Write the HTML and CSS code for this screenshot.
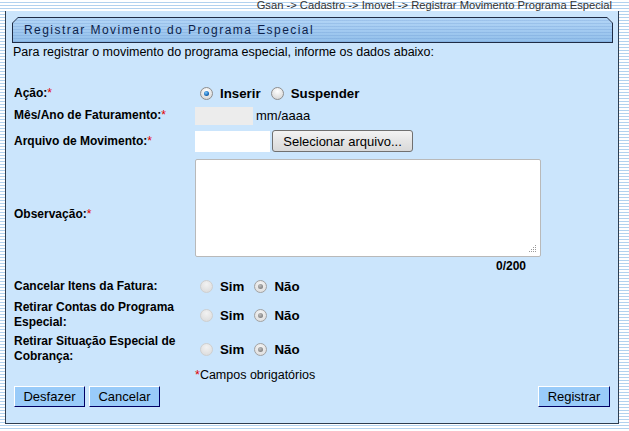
FILE: index.html
```html
<!DOCTYPE html>
<html lang="pt-BR">
<head>
<meta charset="utf-8">
<title>Registrar Movimento do Programa Especial</title>
<link rel="stylesheet" href="styles.css">
</head>
<body>
<div class="crumb">Gsan -&gt; Cadastro -&gt; Imovel -&gt; Registrar Movimento Programa Especial</div>
<div class="panel">
  <div class="tab"><div class="tab-in"><span class="tab-title">Registrar Movimento do Programa Especial</span></div></div>
  <p class="intro">Para registrar o movimento do programa especial, informe os dados abaixo:</p>
  <div class="form">
    <div class="row r-acao">
      <div class="lbl">Ação:<em>*</em></div>
      <div class="fld">
        <span class="rb on"></span><span class="opt">Inserir</span>
        <span class="rb"></span><span class="opt">Suspender</span>
      </div>
    </div>
    <div class="row r-mes">
      <div class="lbl">Mês/Ano de Faturamento:<em>*</em></div>
      <div class="fld"><input class="in-mes" type="text"><span class="hint">mm/aaaa</span></div>
    </div>
    <div class="row r-arq">
      <div class="lbl">Arquivo de Movimento:<em>*</em></div>
      <div class="fld"><input class="in-arq" type="text"><button class="file-btn" type="button">Selecionar arquivo...</button></div>
    </div>
    <div class="row r-obs">
      <div class="lbl">Observação:<em>*</em></div>
      <div class="fld col">
        <div class="ta-wrap">
          <textarea class="ta"></textarea>
          <svg class="grip" width="8" height="8" viewBox="0 0 8 8"><g fill="#9a9a9a"><rect x="6" y="0" width="1" height="1"/><rect x="4" y="2" width="1" height="1"/><rect x="6" y="2" width="1" height="1"/><rect x="2" y="4" width="1" height="1"/><rect x="4" y="4" width="1" height="1"/><rect x="6" y="4" width="1" height="1"/><rect x="0" y="6" width="1" height="1"/><rect x="2" y="6" width="1" height="1"/><rect x="4" y="6" width="1" height="1"/><rect x="6" y="6" width="1" height="1"/></g></svg>
        </div>
        <div class="counter">0/200</div>
      </div>
    </div>
    <div class="row r-canc">
      <div class="lbl">Cancelar Itens da Fatura:</div>
      <div class="fld"><span class="rb dis"></span><span class="opt">Sim</span><span class="rb dis on"></span><span class="opt">Não</span></div>
    </div>
    <div class="row r-contas">
      <div class="lbl">Retirar Contas do Programa Especial:</div>
      <div class="fld"><span class="rb dis"></span><span class="opt">Sim</span><span class="rb dis on"></span><span class="opt">Não</span></div>
    </div>
    <div class="row r-sit">
      <div class="lbl">Retirar Situação Especial de Cobrança:</div>
      <div class="fld"><span class="rb dis"></span><span class="opt">Sim</span><span class="rb dis on"></span><span class="opt">Não</span></div>
    </div>
    <div class="row r-req">
      <div class="lbl"></div>
      <div class="fld req"><em>*</em>Campos obrigatórios</div>
    </div>
  </div>
  <div class="actions">
    <div class="left">
      <button class="btn w71" type="button">Desfazer</button>
      <button class="btn w71" type="button">Cancelar</button>
    </div>
    <button class="btn w72" type="button">Registrar</button>
  </div>
</div>
</body>
</html>
```
FILE: styles.css
```css
html, body {
  margin: 0;
  padding: 0;
}
body {
  width: 629px;
  height: 431px;
  overflow: hidden;
  font-family: "Liberation Sans", Arial, sans-serif;
  color: #000;
  background: repeating-linear-gradient(to bottom, #ffffff 0 2px, #b2d2ef 2px 3px);
}
.crumb {
  height: 11px;
  font-size: 11.2px;
  line-height: 11px;
  text-align: right;
  padding-right: 17px;
  color: #333;
  white-space: nowrap;
}
.panel {
  margin-left: 5px;
  width: 612px;
  height: 412px;
  border: 1px solid #2e3d4f;
  border-top: 0;
  background: #cbe5fc;
  display: flex;
  flex-direction: column;
}
.tab {
  margin: 6px 0 0 6px;
  width: 601px;
  height: 26px;
  background: #1f2c45;
  clip-path: polygon(6px 0, calc(100% - 6px) 0, 100% 6px, 100% 100%, 0 100%, 0 6px);
  display: flex;
}
.tab-in {
  flex: 1;
  margin: 1px;
  clip-path: polygon(5px 0, calc(100% - 5px) 0, 100% 5px, 100% 100%, 0 100%, 0 5px);
  background:
    repeating-linear-gradient(to bottom, rgba(255,255,255,0) 0 2px, rgba(70,120,190,0.18) 2px 3px),
    linear-gradient(to bottom, #b4d6f7, #92bfea);
  display: flex;
  align-items: center;
  padding-left: 11px;
}
.tab-title {
  font-size: 12px;
  letter-spacing: 1.45px;
  color: #0d1f4a;
  white-space: nowrap;
}
.intro {
  margin: 2px 0 0 7px;
  font-size: 12.5px;
  line-height: 14px;
  white-space: nowrap;
}
.form {
  margin-top: 24px;
  padding-left: 8px;
  display: flex;
  flex-direction: column;
}
.row {
  display: grid;
  grid-template-columns: 181px 1fr;
  align-items: center;
}
.lbl {
  font-size: 12px;
  font-weight: bold;
  line-height: 15px;
  padding-right: 8px;
}
em {
  font-style: normal;
  font-weight: normal;
  color: #e00000;
}
.fld {
  display: flex;
  align-items: center;
  font-size: 12px;
}
.fld.req {
  font-size: 12.5px;
}
.fld.col {
  flex-direction: column;
  align-items: flex-start;
}
.r-acao { height: 21px; }
.r-mes { height: 23px; }
.r-arq { height: 28px; }
.r-obs { height: 118px; }
.r-canc { height: 27px; }
.r-contas { height: 30px; }
.r-sit { height: 38px; }
.r-req { height: 14px; }

.rb {
  width: 13px;
  height: 13px;
  box-sizing: border-box;
  border-radius: 50%;
  border: 1px solid #8e8e8e;
  background: radial-gradient(circle at 50% 30%, #ffffff, #d9d9d9 80%);
  margin: 0 7px 0 5px;
  position: relative;
  flex: none;
}
.rb.on::after {
  content: "";
  position: absolute;
  left: 3px;
  top: 3px;
  width: 5px;
  height: 5px;
  border-radius: 50%;
  background: radial-gradient(circle at 40% 35%, #7cc8ff, #1669b8 60%, #0b3e74);
}
.rb.dis {
  border-color: #cfcfcf;
  background: radial-gradient(circle at 50% 30%, #f2f2f2, #dedede 80%);
}
.rb.dis.on {
  border-color: #a2a2a2;
  background: radial-gradient(circle at 50% 30%, #f4f4f4, #e0e0e0 80%);
}
.rb.dis.on::after {
  background: radial-gradient(circle at 40% 35%, #bdbdbd, #858585 70%);
}
.opt {
  font-size: 13.3px;
  font-weight: bold;
  margin-right: 5px;
}
.in-mes {
  width: 58px;
  height: 18px;
  box-sizing: border-box;
  border: 0;
  margin: 0;
  padding: 0;
  background: #ececec;
}
.hint {
  font-size: 13px;
  margin-left: 3px;
}
.in-arq {
  width: 75px;
  height: 21px;
  box-sizing: border-box;
  border: 0;
  margin: 0;
  padding: 0;
  background: #fff;
}
.file-btn {
  margin: 0 0 0 2px;
  width: 141px;
  height: 22px;
  box-sizing: border-box;
  border: 1px solid #707070;
  border-radius: 3px;
  background: linear-gradient(to bottom, #f3f3f3, #e5e5e5 50%, #d9d9d9);
  font-family: "Liberation Sans", Arial, sans-serif;
  font-size: 13px;
  color: #000;
  padding: 0;
}
.ta-wrap {
  position: relative;
  margin-top: 3px;
  width: 346px;
  height: 98px;
}
.ta {
  display: block;
  width: 346px;
  height: 98px;
  box-sizing: border-box;
  margin: 0;
  border: 1px solid #b9b9b9;
  border-radius: 2px;
  background: #fff;
  resize: none;
}
.grip {
  position: absolute;
  right: 4px;
  bottom: 4px;
}
.counter {
  width: 331px;
  text-align: right;
  font-weight: bold;
  font-size: 12px;
  line-height: 14px;
  margin-top: 2px;
}
.actions {
  margin-top: 4px;
  padding: 0 8px;
  display: flex;
  justify-content: space-between;
}
.left {
  display: flex;
  gap: 4px;
}
.btn {
  height: 21px;
  box-sizing: border-box;
  margin: 0;
  padding: 0;
  border: 1px solid;
  border-color: #ffffff #000066 #000066 #ffffff;
  background: #99cbf9;
  font-family: "Liberation Sans", Arial, sans-serif;
  font-size: 13px;
  color: #000;
}
.w71 { width: 71px; }
.w72 { width: 72px; }
```
